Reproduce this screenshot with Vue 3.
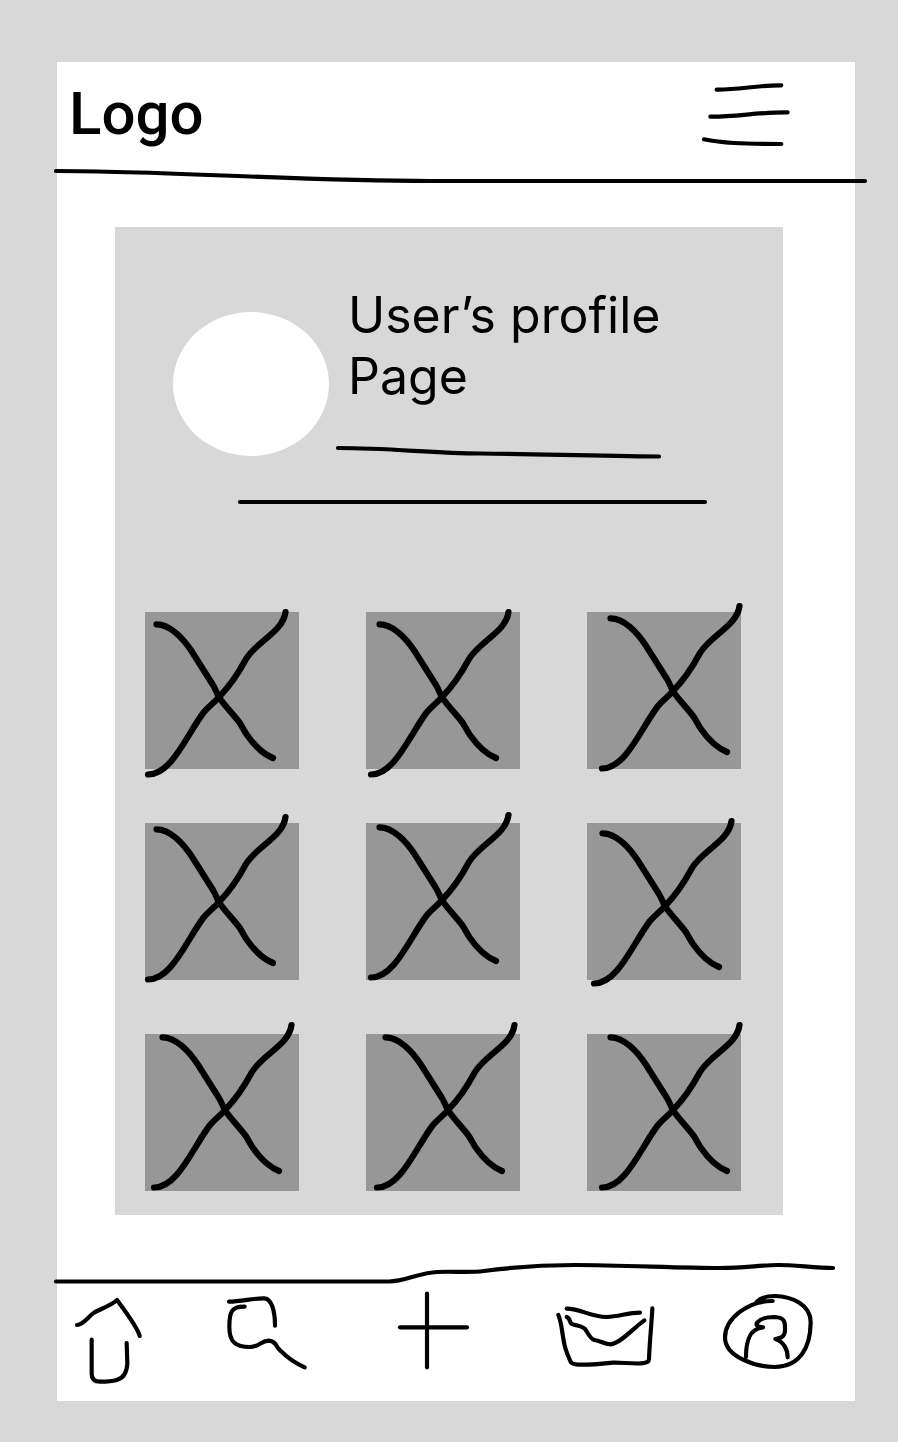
<script setup>
const tiles = [
  { x: 0, y: 0 },
  { x: 2, y: 0 },
  { x: 12, y: -6 },
  { x: 0, y: -6 },
  { x: 2, y: -8 },
  { x: 4, y: -2 },
  { x: 6, y: -9 },
  { x: 8, y: -9 },
  { x: 12, y: -9 },
]

const links = [
  {
    label: 'Home',
    box: '75 120 201 288',
    width: 67,
    paths: [
      'M81 225 C100 224 115 200 132 188 C148 178 182 168 201 150 C215 170 262 230 269 258',
      'M125 269 L125 372 C125 388 134 395 150 395 C170 395 190 393 200 390 C222 384 231 362 232 340 L230 279',
    ],
  },
  {
    label: 'Search',
    box: '531 120 237 288',
    width: 79,
    paths: [
      'M537 155 C575 155 610 144 643 145 C666 147 675 185 675 227',
      'M584 170 C545 169 538 185 538 230 C538 275 555 291 600 291 C628 291 632 272 657 272 C677 273 677 288 690 301 C708 319 735 340 764 352',
    ],
  },
  {
    label: 'Add',
    box: '54 120 213 288',
    width: 71,
    paths: ['M141 131 L141 352', 'M60 232 L261 232'],
  },
  {
    label: 'Messages',
    box: '48 120 297 288',
    width: 99,
    paths: [
      'M55 195 C67 222 66 260 76 294 C81 313 88 326 93 337 C101 350 172 342 218 338 C250 336 326 350 327 328 C329 270 335 222 337 175',
      'M80 176 C124 177 150 200 200 201 C240 200 260 188 300 188',
      'M80 201 C93 205 86 220 98 223 C112 226 127 229 134 236 C144 248 149 265 163 270 C182 273 196 283 212 283 C242 280 278 236 313 211',
    ],
  },
  {
    label: 'Profile',
    box: '549 120 270 288',
    width: 90,
    paths: [
      'M698 153 C625 152 555 205 555 263 C556 320 645 351 704 351 C780 350 811 293 812 218 C813 165 757 139 704 138 C682 138 662 144 650 155',
      'M618 321 C618 275 627 236 669 232 C653 229 645 226 652 217 C664 203 685 201 703 201 C738 202 735 220 735 240 C735 260 724 265 706 267 C732 275 743 300 743 322',
    ],
  },
]
</script>

<template>
  <div class="page">
    <main class="phone">
      <header class="top">
        <a class="logo" href="#">Logo</a>
        <button class="menu" type="button" aria-label="Menu">
          <svg class="icon" width="88" height="66" viewBox="66 66 264 198" aria-hidden="true">
            <path d="M110 89 C175 90 235 75 304 76" />
            <path d="M91 170 C165 171 240 156 323 157" />
            <path d="M72 238 C125 249 180 252 304 252" />
          </svg>
        </button>
      </header>
      <svg class="rule head-rule" viewBox="57 168 798 16" preserveAspectRatio="none" aria-hidden="true">
        <path d="M56 171 C170 171 300 181 430 181 L865 181" />
      </svg>

      <section class="card">
        <div class="intro">
          <div class="avatar"></div>
          <div class="about">
            <h1>User’s profile Page</h1>
            <svg class="rule name-rule" viewBox="348 446 393 12" preserveAspectRatio="none" aria-hidden="true">
              <path d="M338 448 C390 448 430 453 480 453.5 C540 454 590 456 659 456.5" />
            </svg>
          </div>
        </div>
        <svg class="rule bio-rule" viewBox="145 500 596 4" preserveAspectRatio="none" aria-hidden="true">
          <path d="M240 502 L705 502" />
        </svg>
        <ul class="grid">
          <li v-for="(tile, i) in tiles" :key="i" class="tile">
            <svg class="cross" viewBox="0 0 154 157" aria-hidden="true">
              <g :transform="`translate(${tile.x} ${tile.y})`">
                <path d="M11.5 12.3 C25 12.3 38 26 46.5 39 L68 73 C71 78 72 82 74.5 86 C80 94 88 102 94.5 110.5 C98 116 99 119 102 123 C109 133 118 142 128 146" />
                <path d="M3 162.5 C27 162.5 42 122 59 100 C64 94 69 91 74 85 C86 73 94 60 101 47 C112 29 138 20 140.5 0" />
              </g>
            </svg>
          </li>
        </ul>
      </section>

      <svg class="rule foot-rule" viewBox="57 1264 798 18" preserveAspectRatio="none" aria-hidden="true">
        <path d="M56 1281.5 L389 1281.5 C405 1281.5 418 1273 437 1272 C452 1271 468 1273 484 1271 C510 1267.5 535 1265 575 1265 C620 1265 680 1268 720 1268 C745 1268 760 1265 778 1265 C795 1265 815 1268 833 1268" />
      </svg>
      <nav class="nav">
        <a v-for="link in links" :key="link.label" href="#" :aria-label="link.label">
          <svg class="icon" :width="link.width" height="96" :viewBox="link.box" aria-hidden="true">
            <path v-for="d in link.paths" :key="d" :d="d" />
          </svg>
        </a>
      </nav>
    </main>
  </div>
</template>

<style>
body {
  margin: 0;
  background: #d8d8d8;
}
</style>

<style scoped>
.page {
  box-sizing: border-box;
  padding: 62px 43px 41px 57px;
  background: #d8d8d8;
  color: #000;
  font-family: Inter, "Liberation Sans", sans-serif;
}
.phone {
  background: #fff;
}
.top {
  display: flex;
  justify-content: space-between;
  align-items: flex-start;
  padding: 12px 65px 14px 12px;
}
.logo {
  color: #000;
  font-family: Roboto, "Open Sans", sans-serif;
  font-size: 60px;
  font-weight: 500;
  line-height: 80px;
  text-decoration: none;
}
.menu {
  margin: 8px 0 0;
  padding: 0;
  border: 0;
  background: none;
  cursor: pointer;
}
svg {
  display: block;
  overflow: visible;
  fill: none;
  stroke: #000;
  stroke-linecap: round;
  stroke-linejoin: round;
}
.icon {
  stroke-width: 12.5;
}
.rule {
  width: 100%;
  stroke-width: 4.2;
}
.head-rule {
  height: 16px;
}
.card {
  margin: 43px 72px 0 58px;
  padding: 58px 42px 24px 30px;
  background: #d8d8d8;
}
.intro {
  display: flex;
  gap: 19px;
  padding-left: 28px;
}
.avatar {
  flex: none;
  width: 156px;
  height: 144px;
  margin-top: 27px;
  border-radius: 50%;
  background: #fff;
}
.about {
  flex: 1;
}
h1 {
  margin: 0;
  font-size: 50px;
  font-weight: 400;
  line-height: 61px;
}
.name-rule {
  height: 12px;
  margin-top: 39px;
}
.bio-rule {
  height: 4px;
  margin-top: 42px;
}
.grid {
  display: grid;
  grid-template-columns: repeat(3, 1fr);
  gap: 54px 67px;
  margin: 108px 0 0;
  padding: 0;
  list-style: none;
}
.tile {
  position: relative;
  aspect-ratio: 154 / 157;
  background: #979797;
}
.cross {
  position: absolute;
  inset: 0;
  width: 100%;
  height: 100%;
  stroke-width: 6.2;
}
.foot-rule {
  height: 18px;
  margin-top: 49px;
}
.nav {
  display: grid;
  grid-template-columns: 152fr 171fr 158fr 167fr 90fr;
  margin-top: 8px;
  padding: 0 42px 15px 18px;
}
</style>
